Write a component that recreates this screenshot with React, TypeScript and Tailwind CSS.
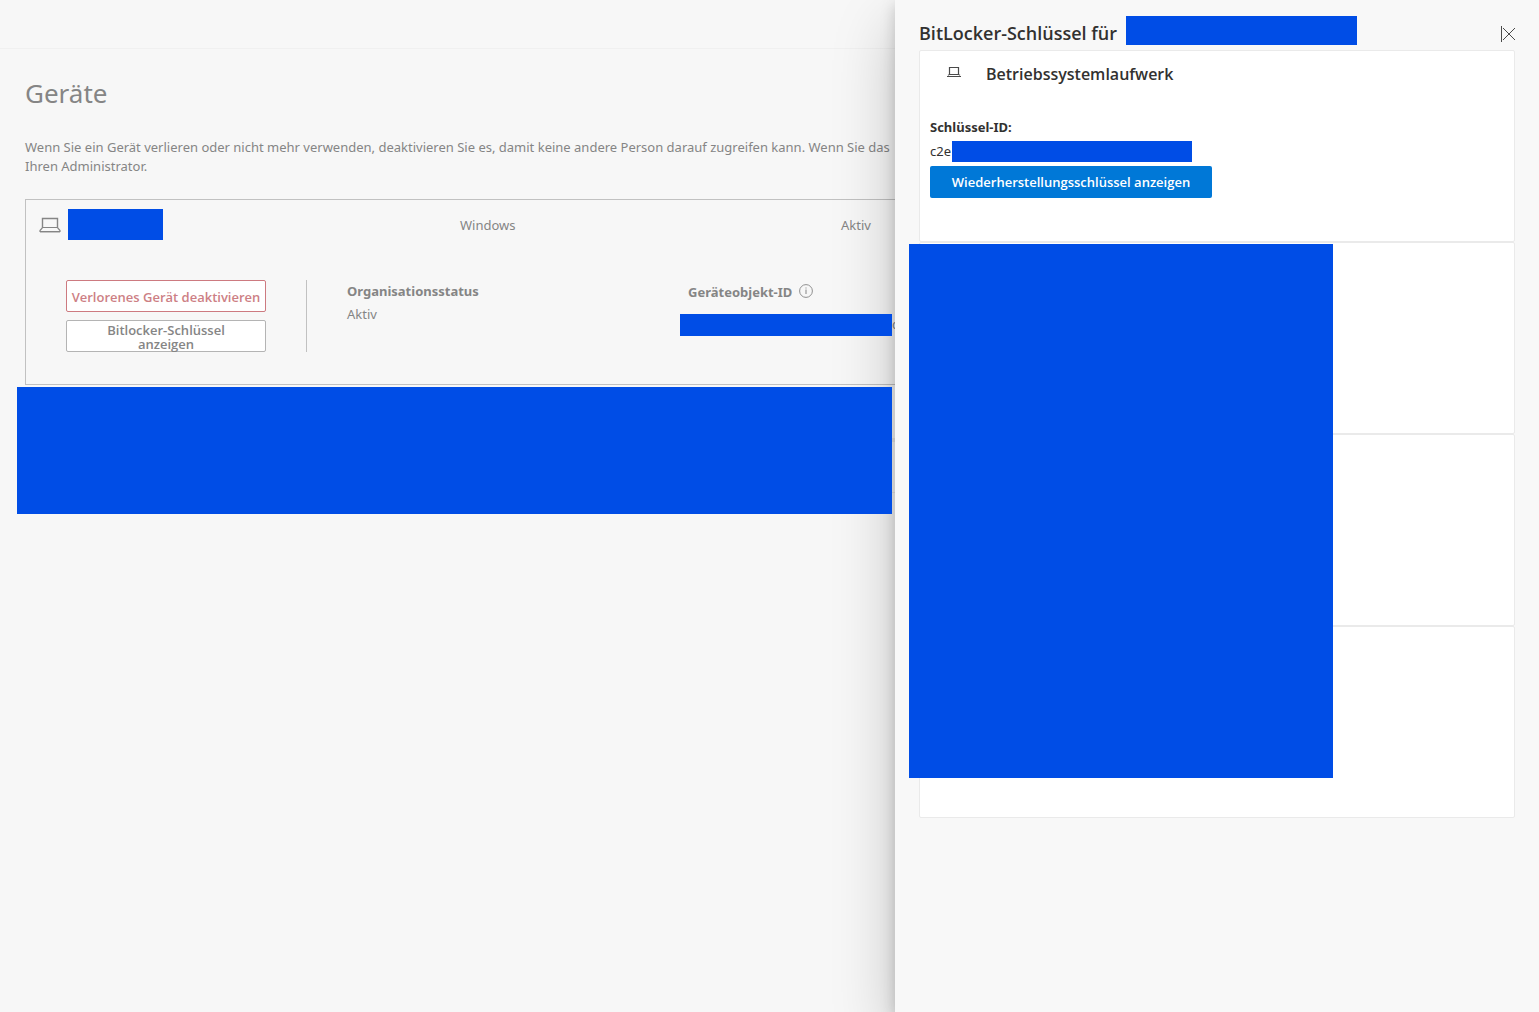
import React from "react";

function LaptopLarge() {
  return (
    <svg width="22" height="16" viewBox="0 0 22 16" fill="none" stroke="#858585" aria-hidden="true">
      <path d="M3.5 10.5v-9h15v9" strokeWidth="1.4" />
      <path d="M3.5 10.5h15l2.5 3v1H1v-1z" strokeWidth="1.2" />
      <path d="M1 15.5h20" stroke="#c4c4c4" />
    </svg>
  );
}

function LaptopSmall() {
  return (
    <svg width="14" height="10" viewBox="0 0 14 10" fill="none" stroke="#4a4a4a" aria-hidden="true">
      <path d="M2.5 7.5v-7h9v7z" strokeWidth="1.2" />
      <path d="M1.5 7.5v1M12.5 7.5v1M0 9.5h14" strokeWidth="1.2" />
    </svg>
  );
}

function InfoIcon() {
  return (
    <svg width="14" height="14" viewBox="0 0 14 14" fill="none" stroke="#858585" aria-hidden="true">
      <circle cx="7" cy="7" r="6.4" strokeWidth="0.9" />
      <path d="M7 5.5V10" />
      <path d="M7 3.5v1" />
    </svg>
  );
}

function CloseIcon() {
  return (
    <svg width="15" height="16" viewBox="0 0 15 16" fill="none" stroke="#4a4a4a" aria-hidden="true">
      <path d="M.5 0v16" />
      <path d="M2 2l12 12M14 2 2 14" />
    </svg>
  );
}

function Block({ className }: { className: string }) {
  return <div aria-hidden="true" className={`bg-[#004de6] ${className}`} />;
}

function DeviceCard() {
  return (
    <section className="ml-[25px] mt-[23px] h-[186px] border border-r-0 border-[#c1c1c1]">
      <div className="mt-[9px] flex h-[31px] items-center">
        <div className="flex w-[434px] shrink-0 items-center pl-[13px]">
          <LaptopLarge />
          <Block className="ml-[7px] h-[31px] w-[95px]" />
        </div>
        <div className="w-[381px] shrink-0 pt-[2px]">Windows</div>
        <div className="pt-[2px]">Aktiv</div>
      </div>
      <div className="mt-10 flex">
        <div className="ml-10 flex w-[241px] shrink-0 flex-col gap-2 border-r border-[#c1c1c1] pr-10">
          <button className="h-8 whitespace-nowrap rounded-[2px] border border-[#cd7a80] bg-white pt-[2px] font-['Open_Sans',sans-serif] text-[13px] font-semibold leading-[14px] text-[#cd7f85]">
            Verlorenes Gerät deaktivieren
          </button>
          <button className="h-8 rounded-[2px] border border-[#b4b4b4] bg-white px-8 pt-[2px] font-['Open_Sans',sans-serif] text-[13px] font-semibold leading-[14px]">
            Bitlocker-Schlüssel anzeigen
          </button>
        </div>
        <div className="ml-10 w-[333px] shrink-0">
          <h2 className="text-[13px] font-bold leading-[22px]">Organisationsstatus</h2>
          <p className="leading-6">Aktiv</p>
        </div>
        <div className="min-w-0 flex-1">
          <div className="flex pl-2">
            <h2 className="text-[13px] font-bold leading-6">Geräteobjekt-ID</h2>
            <button aria-label="Informationen" className="ml-[7px] h-[22px]">
              <InfoIcon />
            </button>
          </div>
          <div className="mt-[10px] flex h-[22px] items-center overflow-hidden">
            <Block className="relative z-20 h-[22px] w-[212px] shrink-0" />
            <span>c</span>
          </div>
        </div>
      </div>
    </section>
  );
}

function DriveCard({ children }: { children?: React.ReactNode }) {
  return <section className="h-48 rounded-[2px] border border-[#eaeaea] bg-white">{children}</section>;
}

export default function App() {
  return (
    <div className="flex min-h-screen bg-[#f7f7f7] font-['Noto_Sans','Open_Sans',sans-serif] text-[13px] text-[#858585]">
      <main className="min-w-0 flex-1 overflow-hidden">
        <header className="h-[49px] border-b border-[#f0f0f0]" />
        <h1 className="ml-[25px] mt-6 text-[26px] leading-10">Geräte</h1>
        <p className="ml-[25px] mt-[25px] whitespace-nowrap leading-[19px]">
          Wenn Sie ein Gerät verlieren oder nicht mehr verwenden, deaktivieren Sie es, damit keine andere Person darauf
          zugreifen kann. Wenn Sie das
          <br />
          Ihren Administrator.
        </p>
        <DeviceCard />
        <div className="ml-[17px] mt-[2px] flex h-[127px] items-start">
          <Block className="relative z-20 h-full flex-1" />
          <div className="mt-[51px] h-[55px] w-[3px] border-b border-t-4 border-[#e8e8e8]" />
        </div>
      </main>

      <aside className="relative z-10 w-[644px] shrink-0 bg-[#f8f8f8] px-6 text-[#323130] shadow-[0_26px_58px_0_rgba(0,0,0,0.22),0_5px_14px_0_rgba(0,0,0,0.18)]">
        <div className="flex h-[50px] items-start pt-4">
          <h2 className="w-[207px] shrink-0 whitespace-nowrap font-['Open_Sans',sans-serif] text-[18px] font-semibold leading-[34px]">
            BitLocker-Schlüssel für
          </h2>
          <Block className="h-[29px] w-[231px]" />
          <button aria-label="Schließen" className="-mr-px ml-auto mt-[10px]">
            <CloseIcon />
          </button>
        </div>
        <DriveCard>
          <div className="flex h-[45px] items-center pl-[27px]">
            <div className="pb-1">
              <LaptopSmall />
            </div>
            <h3 className="ml-[25px] font-['Open_Sans',sans-serif] text-base font-semibold">Betriebssystemlaufwerk</h3>
          </div>
          <div className="pl-[10px] pt-5">
            <h4 className="text-[13px] font-bold leading-[22px]">Schlüssel-ID:</h4>
            <div className="mt-[2px] flex h-[22px] items-center">
              <span className="w-[22px] pt-[2px]">c2e</span>
              <Block className="h-[21px] w-[240px]" />
            </div>
            <button className="mt-1 h-8 w-[282px] rounded-[2px] bg-[#0078d7] pt-[2px] font-['Open_Sans',sans-serif] text-[13px] font-semibold text-white">
              Wiederherstellungsschlüssel anzeigen
            </button>
          </div>
        </DriveCard>
        <div className="relative">
          <DriveCard />
          <DriveCard />
          <DriveCard />
          <Block className="absolute -left-[10px] top-[2px] h-[534px] w-[424px]" />
        </div>
      </aside>
    </div>
  );
}
